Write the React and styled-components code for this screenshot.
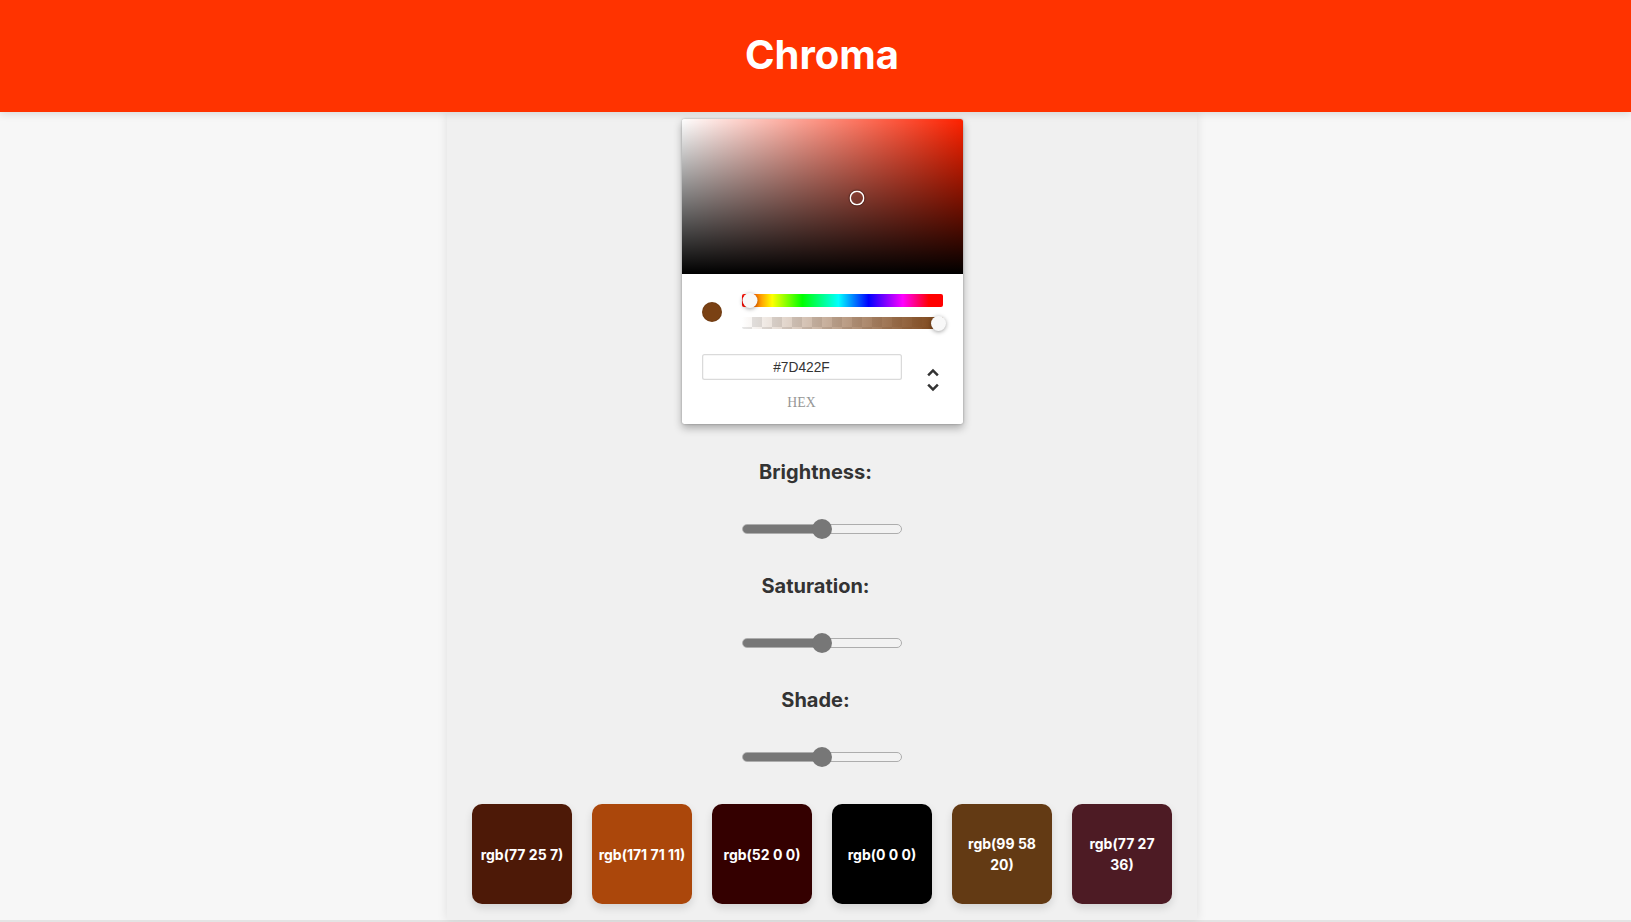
import React, { useState } from 'react';
import styled, { createGlobalStyle } from 'styled-components';

const GlobalStyle = createGlobalStyle`
  html, body {
    margin: 0;
    padding: 0;
    background: #f7f7f7;
    overflow: hidden;
  }
  body {
    font-family: Inter, "Noto Sans", sans-serif;
  }
`;

const HUE = 15;
const PICKED = 'rgb(122, 65, 20)';

const swatches = [
  { r: 77, g: 25, b: 7 },
  { r: 171, g: 71, b: 11 },
  { r: 52, g: 0, b: 0 },
  { r: 0, g: 0, b: 0 },
  { r: 99, g: 58, b: 20 },
  { r: 77, g: 27, b: 36 },
];

const App = () => {
  const [brightness, setBrightness] = useState(50);
  const [saturation, setSaturation] = useState(50);
  const [shade, setShade] = useState(50);

  return (
    <Page>
      <GlobalStyle />
      <Header>
        <Title>Chroma</Title>
      </Header>
      <Panel>
        <PickerCard>
          <Saturation $hue={8}>
            <SatPointer style={{ left: '62.4%', top: '51%' }} />
          </Saturation>
          <PickerBody>
            <Controls>
              <ColorCol>
                <ColorDot style={{ background: PICKED }} />
              </ColorCol>
              <Toggles>
                <HueBar>
                  <Thumb style={{ left: `${(HUE / 360) * 100}%` }} />
                </HueBar>
                <AlphaBar>
                  <AlphaFill $color={PICKED} />
                  <Thumb $alpha style={{ left: '100%' }} />
                </AlphaBar>
              </Toggles>
            </Controls>
            <Fields>
              <FieldWrap>
                <HexInput defaultValue="#7D422F" />
                <FieldLabel>hex</FieldLabel>
              </FieldWrap>
              <ToggleCol>
                <svg viewBox="0 0 24 24" width="30" height="30">
                  <path
                    fill="#333"
                    d="M12,18.17L8.83,15L7.42,16.41L12,21L16.59,16.41L15.17,15M12,5.83L15.17,9L16.58,7.59L12,3L7.41,7.59L8.83,9L12,5.83Z"
                  />
                </svg>
              </ToggleCol>
            </Fields>
          </PickerBody>
        </PickerCard>

        <AdjustGroup>
          <AdjustLabel>Brightness:</AdjustLabel>
          <Range min="0" max="100" value={brightness} $pct={brightness} onChange={(e) => setBrightness(+e.target.value)} />
        </AdjustGroup>
        <AdjustGroup>
          <AdjustLabel>Saturation:</AdjustLabel>
          <Range min="0" max="100" value={saturation} $pct={saturation} onChange={(e) => setSaturation(+e.target.value)} />
        </AdjustGroup>
        <AdjustGroup>
          <AdjustLabel>Shade:</AdjustLabel>
          <Range min="0" max="100" value={shade} $pct={shade} onChange={(e) => setShade(+e.target.value)} />
        </AdjustGroup>

        <SwatchRow>
          {swatches.map((c, i) => (
            <Swatch key={i} $bg={`rgb(${c.r}, ${c.g}, ${c.b})`}>
              rgb({c.r} {c.g} {c.b})
            </Swatch>
          ))}
        </SwatchRow>
      </Panel>
    </Page>
  );
};

/* the original layout sits ~6.5px right of the viewport centre */
const SHIFT = 13;

const Page = styled.div`
  height: 100vh;
  box-sizing: border-box;
  display: flex;
  flex-direction: column;
  border-bottom: 2px solid #e4e4e4;
`;

const Header = styled.header`
  position: relative;
  z-index: 2;
  height: 112px;
  flex-shrink: 0;
  background: #ff3300;
  display: flex;
  align-items: center;
  justify-content: center;
  padding: 0 0 4px ${SHIFT}px;
  box-sizing: border-box;
  box-shadow: 0 2px 8px rgba(0, 0, 0, 0.12);
`;

const Title = styled.h1`
  margin: 0;
  color: #fff;
  font-family: Inter, "Noto Sans", sans-serif;
  font-size: 40px;
  font-weight: 700;
`;

const Panel = styled.main`
  flex: 1;
  width: 750px;
  margin: 0 0 0 calc(50% - 375px + ${SHIFT / 2}px);
  background: #f0f0f0;
  box-shadow: 0 0 10px rgba(0, 0, 0, 0.1);
  display: flex;
  flex-direction: column;
  align-items: center;
  gap: 35px;
  padding-top: 7px;
  box-sizing: border-box;
`;

const PickerCard = styled.div`
  width: 281px;
  background: #fff;
  border-radius: 2.5px;
  box-shadow: 0 0 2px rgba(0, 0, 0, 0.3), 0 4px 8px rgba(0, 0, 0, 0.3);
  margin-bottom: 1px;
  font-family: "Liberation Sans", Arial, sans-serif;
`;

const Saturation = styled.div`
  position: relative;
  height: 155px;
  border-radius: 2.5px 2.5px 0 0;
  overflow: hidden;
  background:
    linear-gradient(to top, #000, rgba(0, 0, 0, 0)),
    linear-gradient(to right, #fff, rgba(255, 255, 255, 0)),
    hsl(${(p) => p.$hue}, 100%, 50%);
`;

const SatPointer = styled.div`
  position: absolute;
  width: 15px;
  height: 15px;
  border-radius: 50%;
  transform: translate(-7.5px, -7.5px);
  box-shadow: inset 0 0 0 1.5px #fff, 0 0 1px 1px rgba(0, 0, 0, 0.3);
`;

const PickerBody = styled.div`
  padding: 20px 20px 14px;
`;

const Controls = styled.div`
  display: flex;
`;

const ColorCol = styled.div`
  width: 40px;
  flex-shrink: 0;
`;

const ColorDot = styled.div`
  width: 20px;
  height: 20px;
  margin-top: 7.5px;
  border-radius: 50%;
  box-shadow: inset 0 0 0 1px rgba(0, 0, 0, 0.08);
`;

const Toggles = styled.div`
  flex: 1;
  display: flex;
  flex-direction: column;
  gap: 10px;
`;

const HueBar = styled.div`
  position: relative;
  height: 12.5px;
  border-radius: 2px;
  background: linear-gradient(
    to right,
    #f00 0%,
    #ff0 15%,
    #0f0 30%,
    #0ff 48%,
    #00f 63%,
    #f0f 80%,
    #f00 93%,
    #f00 100%
  );
`;

const AlphaBar = styled.div`
  position: relative;
  height: 12.5px;
  border-radius: 2px;
  background-color: #fff;
  background-image:
    linear-gradient(45deg, #e6e6e6 25%, transparent 25%, transparent 75%, #e6e6e6 75%),
    linear-gradient(45deg, #e6e6e6 25%, transparent 25%, transparent 75%, #e6e6e6 75%);
  background-size: 20px 20px;
  background-position: 0 0, 10px 10px;
`;

const AlphaFill = styled.div`
  height: 100%;
  border-radius: 2px;
  background: linear-gradient(to right, rgba(122, 65, 20, 0), ${(p) => p.$color});
`;

const Thumb = styled.div`
  position: absolute;
  top: -1px;
  width: 15px;
  height: 15px;
  border-radius: 50%;
  background: #f8f8f8;
  transform: translateX(${(p) => (p.$alpha ? '-12px' : '-7.5px')});
  box-shadow: 0 1px 4px rgba(0, 0, 0, 0.37);
`;

const Fields = styled.div`
  display: flex;
  margin-top: 25px;
`;

const FieldWrap = styled.div`
  flex: 1;
  display: flex;
  flex-direction: column;
  align-items: stretch;
`;

const HexInput = styled.input`
  font-family: "Liberation Sans", Arial, sans-serif;
  font-size: 13.75px;
  color: #333;
  width: 100%;
  height: 26px;
  box-sizing: border-box;
  border: none;
  border-radius: 2.5px;
  box-shadow: inset 0 0 0 1.25px #dadada;
  text-align: center;
  outline: none;
  padding: 0;
`;

const FieldLabel = styled.span`
  margin-top: 15px;
  font-family: "Liberation Serif", "Times New Roman", serif;
  font-size: 13.75px;
  line-height: 15px;
  color: #969696;
  text-align: center;
  text-transform: uppercase;
`;

const ToggleCol = styled.div`
  width: 46px;
  flex-shrink: 0;
  margin-right: -5px;
  display: flex;
  justify-content: flex-end;
  align-items: flex-start;
  padding-top: 11px;
  box-sizing: border-box;
`;

const AdjustGroup = styled.div`
  display: flex;
  flex-direction: column;
  align-items: center;
  gap: 35px;
`;

/* labels are centred on the viewport, not on the panel */
const AdjustLabel = styled.h3`
  margin: 0 ${SHIFT}px 0 0;
  font-family: Inter, "Noto Sans", sans-serif;
  font-size: 20px;
  line-height: 24px;
  font-weight: 700;
  color: #333;
`;

const Range = styled.input.attrs({ type: 'range' })`
  -webkit-appearance: none;
  appearance: none;
  width: 160px;
  height: 10px;
  margin: 5px 0;
  border: 1px solid #adadad;
  border-radius: 5px;
  box-sizing: border-box;
  outline: none;
  background: linear-gradient(
    to right,
    #777 0%,
    #777 ${(p) => p.$pct}%,
    #f2f2f2 ${(p) => p.$pct}%,
    #f2f2f2 100%
  );

  &::-webkit-slider-thumb {
    -webkit-appearance: none;
    appearance: none;
    width: 20px;
    height: 20px;
    border: none;
    border-radius: 50%;
    background: #777;
    cursor: pointer;
  }
`;

const SwatchRow = styled.div`
  display: flex;
  gap: 20px;
  margin-top: 2px;
`;

const Swatch = styled.div`
  width: 100px;
  height: 100px;
  padding: 0 5px;
  box-sizing: border-box;
  border-radius: 10px;
  background: ${(p) => p.$bg};
  box-shadow: 0 4px 8px rgba(0, 0, 0, 0.12);
  display: flex;
  align-items: center;
  justify-content: center;
  text-align: center;
  color: #fff;
  font-family: Inter, "Noto Sans", sans-serif;
  font-size: 14px;
  font-weight: 700;
  line-height: 21px;
`;

export default App;
